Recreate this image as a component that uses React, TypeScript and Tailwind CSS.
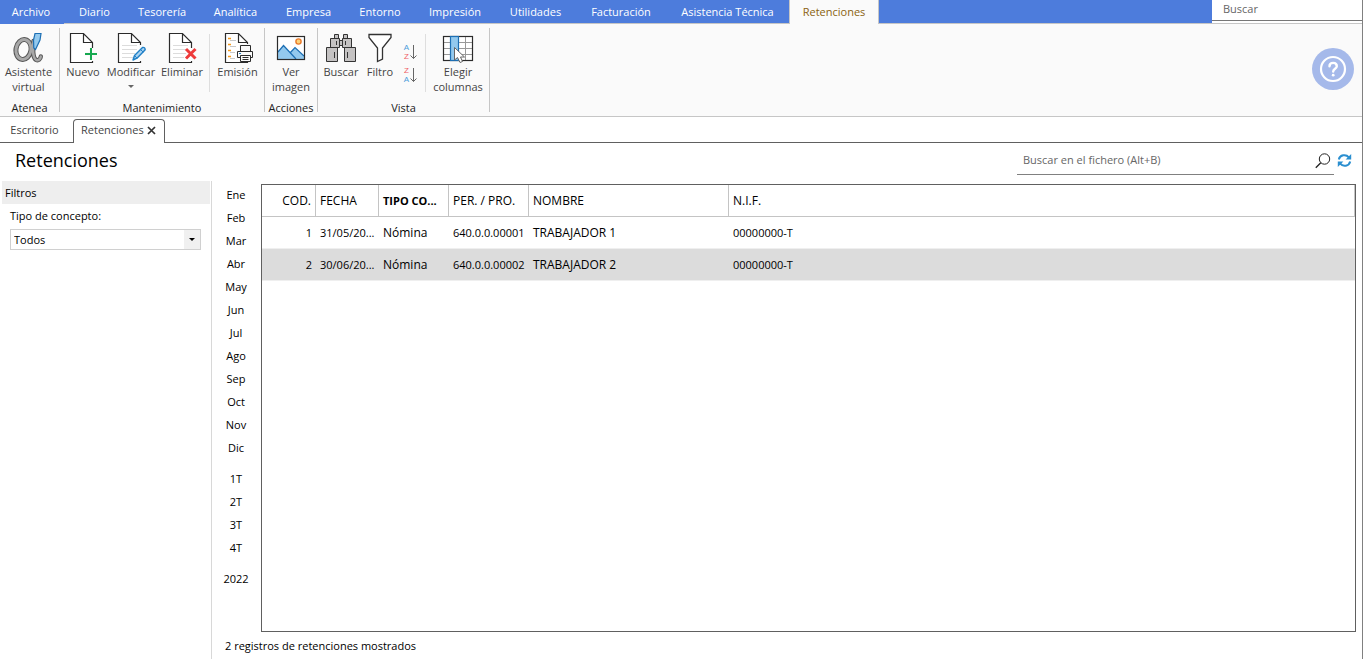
import { useState } from 'react'
import type { ReactNode } from 'react'

const menu = [
  { label: 'Archivo', width: 'w-16' },
  { label: 'Diario', width: 'w-[61px]' },
  { label: 'Tesorería', width: 'w-[74px]' },
  { label: 'Analítica', width: 'w-[73px]' },
  { label: 'Empresa', width: 'w-[73px]' },
  { label: 'Entorno', width: 'w-[70px]' },
  { label: 'Impresión', width: 'w-[80px]' },
  { label: 'Utilidades', width: 'w-[81px]' },
  { label: 'Facturación', width: 'w-[90px]' },
  { label: 'Asistencia Técnica', width: 'w-[123px]' },
]

const periods = [
  ['Ene', 'Feb', 'Mar', 'Abr', 'May', 'Jun', 'Jul', 'Ago', 'Sep', 'Oct', 'Nov', 'Dic'],
  ['1T', '2T', '3T', '4T'],
  ['2022'],
]

const rows = [
  { cod: 1, fecha: '31/05/20...', tipo: 'Nómina', cuenta: '640.0.0.00001', nombre: 'TRABAJADOR 1', nif: '00000000-T' },
  { cod: 2, fecha: '30/06/20...', tipo: 'Nómina', cuenta: '640.0.0.00002', nombre: 'TRABAJADOR 2', nif: '00000000-T' },
]

function Icon({ children }: { children: ReactNode }) {
  return (
    <svg viewBox="0 0 32 32" className="size-8 shrink-0" fill="none" aria-hidden="true">
      {children}
    </svg>
  )
}

function Page({ lines = false }: { lines?: boolean }) {
  return (
    <>
      <path d="M25.5 30.5H3.5V1.5H16.5L25.5 10.5V30.5" fill="#fff" />
      {lines && <path d="M7 13.5H22M7 17.5H22M7 21.5H20M7 25.5H18" stroke="#dcdcdc" />}
      <path d="M25.5 16V10.5L16.5 1.5H3.5V30.5H25.5V29M16.5 1.5V10.5H25.5" stroke="#2b2b2b" strokeWidth="1.2" />
    </>
  )
}

function AtheneaIcon() {
  return (
    <Icon>
      <g strokeLinecap="round">
        <ellipse cx="10.5" cy="17.5" rx="7.5" ry="10" stroke="#555" strokeWidth="5" transform="rotate(10 10.5 17.5)" />
        <path d="M20.5 9C19.5 17 20 26 23 27.8C25.5 29 27.5 27 27.8 24.5" stroke="#555" strokeWidth="4.4" />
        <ellipse cx="10.5" cy="17.5" rx="7.5" ry="10" stroke="#a8a8a8" strokeWidth="3" transform="rotate(10 10.5 17.5)" />
        <path d="M20.5 9C19.5 17 20 26 23 27.8C25.5 29 27.5 27 27.8 24.5" stroke="#a8a8a8" strokeWidth="2.4" />
      </g>
      <path d="M22 1.5H28L27 8L22.5 17.5L20.8 16L20.5 8Z" fill="#93c9ee" stroke="#1d6fb4" strokeWidth="1.2" />
    </Icon>
  )
}

function NewIcon() {
  return (
    <Icon>
      <Page />
      <path d="M18 22H30M24 16V28" stroke="#fafafa" strokeWidth="4" />
      <path d="M18 22H30M24 16V28" stroke="#16a84f" strokeWidth="2" />
    </Icon>
  )
}

function EditIcon() {
  return (
    <Icon>
      <Page lines />
      <path d="M24 13H32V28H24Z" fill="#fafafa" />
      <path d="M18 28L19.5 23.5L27.5 15.5Q30 15 30.2 17.8L22 26.2Z" fill="#a9d3f2" stroke="#1f7fc6" strokeWidth="1.4" strokeLinejoin="round" />
      <path d="M25.5 17.5L28.3 20.2M19.5 23.5L22 26.2" stroke="#1f7fc6" />
    </Icon>
  )
}

function DeleteIcon() {
  return (
    <Icon>
      <Page lines />
      <path d="M20 17L29.5 26.5M29.5 17L20 26.5" stroke="#ee3b3b" strokeWidth="3" />
    </Icon>
  )
}

function PrintIcon() {
  return (
    <Icon>
      <Page />
      <path d="M6 6.5H9M6 12.5H9M6 18.5H9M6 24.5H9" stroke="#f59a1c" strokeWidth="1.6" />
      <path d="M8 8.5H14M8 14.5H14M8 20.5H13M8 26.5H13" stroke="#c9c9c9" />
      <path d="M17 12H30V18H32V27H30V30H17V27H14V18H17Z" fill="#fafafa" />
      <path d="M18.5 19.5V13.5H28.5V19.5M18.5 25.5H15.5V19.5H30.5V25.5H28.5M18.5 23.5H28.5V29.5H18.5ZM20.5 25.5H26.5M20.5 27.5H26.5" stroke="#2b2b2b" />
      <path d="M17 21.5H19" stroke="#1f7fc6" />
    </Icon>
  )
}

function ImageIcon() {
  return (
    <Icon>
      <rect x="2.5" y="4.5" width="27" height="23" fill="#fff" />
      <path d="M3 20L8.5 13.5L15 20L20 15.5L29 24V27.5H3Z" fill="#93c9ee" />
      <path d="M3 20L8.5 13.5L21 27M15.5 20.5L20 15.5L29 24" stroke="#1d6fb4" strokeWidth="1.2" />
      <circle cx="23.5" cy="9.5" r="2.6" fill="#fbd37b" stroke="#ea7b2c" strokeWidth="1.4" />
      <rect x="2.5" y="4.5" width="27" height="23" stroke="#2b2b2b" strokeWidth="1.2" />
    </Icon>
  )
}

function BinocularsIcon() {
  return (
    <Icon>
      <g fill="#c4c2c2" stroke="#333">
        <path d="M9.5 2.5H13.5V6.5H9.5ZM18.5 2.5H22.5V6.5H18.5ZM14.5 8.5H17.5V13.5H14.5Z" />
        <path d="M5.5 6.5H14.5V15.5H5.5ZM17.5 6.5H26.5V15.5H17.5Z" />
        <path d="M1.5 15.5H12.5V29.5H1.5ZM19.5 15.5H30.5V29.5H19.5Z" />
        <path d="M11.5 9V13M20.5 9V13M9.5 20V26M22.5 20V26" />
      </g>
    </Icon>
  )
}

function FilterIcon() {
  return (
    <Icon>
      <path d="M5 2.5H27V5.5L18.5 16V27L13.5 29.5V16L5 5.5Z" fill="#fff" stroke="#333" strokeWidth="1.3" />
    </Icon>
  )
}

function ColumnsIcon() {
  return (
    <Icon>
      <rect x="1.5" y="4.5" width="29" height="24" fill="#fff" />
      <path d="M2 10.5H30M2 16.5H30M2 22.5H30M23.5 5V28" stroke="#999" />
      <rect x="1.5" y="4.5" width="29" height="24" stroke="#2b2b2b" strokeWidth="1.2" />
      <rect x="8.5" y="4.5" width="8" height="24" fill="#93c9ee" stroke="#1d6fb4" strokeWidth="1.2" />
      <path d="M12.5 15.5V28L15.5 25.5L18 30.5L20.5 29.5L18.5 25H22.5Z" fill="#fff" stroke="#666" />
    </Icon>
  )
}

function SortButton({ letters, label }: { letters: string[]; label: string }) {
  return (
    <button type="button" aria-label={label} className="flex h-[23px] w-5 items-center pl-[3px]">
      <span className="flex w-[7px] flex-col items-center font-['Liberation_Sans',sans-serif] text-[8px] leading-[9px]">
        {letters.map(l => (
          <span key={l} className={l === 'A' ? 'text-[#4b9cdb]' : 'text-[#ef5f66]'}>{l}</span>
        ))}
      </span>
      <svg viewBox="0 0 8 16" className="h-4 w-2" fill="none" stroke="#666">
        <path d="M3.5 1V14.5M.5 11.5L3.5 14.5L6.5 11.5" />
      </svg>
    </button>
  )
}

interface ToolProps {
  icon: ReactNode
  label: string
  width: string
  menu?: boolean
}

function Tool({ icon, label, width, menu = false }: ToolProps) {
  return (
    <button type="button" className={`flex flex-col items-center leading-[15px] text-[#444] ${width}`}>
      {icon}
      <span>{label}</span>
      {menu && <span className="mt-1.5 size-0 border-x-[3px] border-t-[3px] border-x-transparent border-t-[#666]" />}
    </button>
  )
}

function Group({ title, width, children }: { title: string; width: string; children: ReactNode }) {
  return (
    <>
      <div className={`flex flex-col justify-between pt-2 ${width}`}>
        <div className="flex justify-center">{children}</div>
        <div className="h-4 text-center leading-4 text-[#222]">{title}</div>
      </div>
      <div className="my-1 w-px bg-[#c6c6c6]" />
    </>
  )
}

function Divider() {
  return <div className="mx-[5px] mt-0.5 h-[58px] w-px bg-[#dedede]" />
}

function DataTable() {
  const [selected, setSelected] = useState(2)
  const head = 'h-8 truncate border-r border-b border-[#c4c4c4] px-1 pt-px font-normal'
  const cell = 'h-8 border-b border-[#efefef] px-1 pt-px'

  return (
    <table className="w-full table-fixed border-separate border-spacing-0">
      <colgroup>
        <col className="w-[54px]" />
        <col className="w-[63px]" />
        <col className="w-[70px]" />
        <col className="w-[80px]" />
        <col className="w-[200px]" />
        <col />
      </colgroup>
      <thead>
        <tr className="text-left text-[12px]">
          <th className={`${head} text-right`}>COD.</th>
          <th className={head}>FECHA</th>
          <th className="h-8 border-r border-b border-[#c4c4c4] pt-px pl-1 text-[11px] font-bold whitespace-nowrap">TIPO CO...</th>
          <th className={head}>PER. / PRO.</th>
          <th className={head}>NOMBRE</th>
          <th className={head}>N.I.F.</th>
        </tr>
      </thead>
      <tbody>
        {rows.map(r => (
          <tr key={r.cod} onClick={() => setSelected(r.cod)} className={r.cod === selected ? 'bg-[#dcdcdc]' : ''}>
            <td className={`${cell} text-right`}>{r.cod}</td>
            <td className={`${cell} whitespace-nowrap`}>{r.fecha}</td>
            <td className={`${cell} text-[12px]`}>{r.tipo}</td>
            <td className={`${cell} whitespace-nowrap`}>{r.cuenta}</td>
            <td className={`${cell} text-[12px]`}>{r.nombre}</td>
            <td className={cell}>{r.nif}</td>
          </tr>
        ))}
      </tbody>
    </table>
  )
}

export default function App() {
  return (
    <div className="flex h-screen flex-col border-r border-[#808080] bg-white font-['Open_Sans',sans-serif] text-[11px] text-black">
      {/* Menu */}
      <nav className="flex h-6 shrink-0 bg-[#4d7cdc] text-white">
        {menu.map((m, i) => (
          <button key={m.label} type="button" className={`shrink-0 whitespace-nowrap ${m.width} ${i === 0 ? 'pr-0.5' : 'border-b border-[#c6c6c6] pt-px'}`}>
            {m.label}
          </button>
        ))}
        <button type="button" className="w-[90px] shrink-0 border-x border-[#c6c6c6] bg-[#fafafa] text-[#8a6210]">Retenciones</button>
        <div className="flex-1 border-b border-[#c6c6c6]" />
        <div className="w-[150px] border-b border-[#c6c6c6] bg-white">
          <input
            type="text"
            aria-label="Buscar"
            placeholder="Buscar"
            className="block h-[21px] w-full border-b border-[#777] px-[11px] pb-1 outline-none placeholder:text-[#666]"
          />
        </div>
      </nav>

      {/* Ribbon */}
      <header className="flex h-[93px] shrink-0 border-b border-[#c6c6c6] bg-[#fafafa]">
        <Group title="Atenea" width="w-[59px]">
          <Tool icon={<AtheneaIcon />} label="Asistente virtual" width="w-[57px] pr-0.5" />
        </Group>
        <Group title="Mantenimiento" width="w-[204px]">
          <Tool icon={<NewIcon />} label="Nuevo" width="w-[38px]" />
          <Tool icon={<EditIcon />} label="Modificar" width="w-[58px]" menu />
          <Tool icon={<DeleteIcon />} label="Eliminar" width="w-[44px]" />
          <Divider />
          <Tool icon={<PrintIcon />} label="Emisión" width="w-[45px]" />
        </Group>
        <Group title="Acciones" width="w-[52px]">
          <Tool icon={<ImageIcon />} label="Ver imagen" width="w-[44px]" />
        </Group>
        <Group title="Vista" width="w-[171px]">
          <Tool icon={<BinocularsIcon />} label="Buscar" width="w-[38px]" />
          <Tool icon={<FilterIcon />} label="Filtro" width="w-10" />
          <div className="pt-2">
            <SortButton letters={['A', 'Z']} label="Orden ascendente" />
            <SortButton letters={['Z', 'A']} label="Orden descendente" />
          </div>
          <Divider />
          <Tool icon={<ColumnsIcon />} label="Elegir columnas" width="w-[54px]" />
        </Group>
        <button type="button" aria-label="Ayuda" className="mt-6 mr-2 ml-auto self-start">
          <svg viewBox="0 0 42 42" className="size-[42px]" fill="none">
            <circle cx="21" cy="21" r="21" fill="#a5b9ea" />
            <circle cx="21" cy="21" r="12" stroke="#fff" strokeWidth="2.2" />
            <path d="M17.5 18.2C17.5 13.8 24.8 13.8 24.8 18.2C24.8 20.8 21.2 20.8 21.2 23.6" stroke="#fff" strokeWidth="2.4" strokeLinecap="round" />
            <circle cx="21.2" cy="27.2" r="1.4" fill="#fff" />
          </svg>
        </button>
      </header>

      {/* Open windows */}
      <div className="flex h-[26px] shrink-0 text-[#444]">
        <button type="button" className="w-[73px] border-b border-[#606060] pt-0.5 pr-1">Escritorio</button>
        <div className="mt-0.5 flex w-[92px] items-center justify-between rounded-t border-x border-t border-[#606060] pr-2 pb-0.5 pl-[7px]">
          <button type="button">Retenciones</button>
          <button type="button" aria-label="Cerrar">
            <svg viewBox="0 0 9 9" className="size-[9px]">
              <path d="M1 1L8 8M8 1L1 8" stroke="#333" strokeWidth="1.7" />
            </svg>
          </button>
        </div>
        <div className="flex-1 border-b border-[#606060]" />
      </div>

      <div className="flex h-[38px] shrink-0 items-start pr-2.5">
        <h1 className="pl-[15px] text-[18px] leading-[34px]">Retenciones</h1>
        <div className="ml-auto flex h-8 w-[317px] items-center border-b border-[#808080] pt-1 pr-[3px]">
          <input
            type="text"
            aria-label="Buscar en el fichero"
            placeholder="Buscar en el fichero (Alt+B)"
            className="min-w-0 flex-1 pl-1.5 outline-none placeholder:text-[#666]"
          />
          <svg viewBox="0 0 16 16" className="size-4" fill="none" stroke="#222" aria-hidden="true">
            <circle cx="9.5" cy="6" r="5.2" />
            <path d="M5.8 9.8L0.8 14.8" strokeWidth="1.3" />
          </svg>
        </div>
        <button type="button" aria-label="Actualizar" className="mt-2.5 ml-[3px]">
          <svg viewBox="0 0 15 15" className="size-[15px]" fill="none">
            <path d="M1.8 6.5C2.8 1.8 9 .8 11.8 4.3M13.2 8.5C12.2 13.2 6 14.2 3.2 10.7" stroke="#2b8fd0" strokeWidth="2" />
            <path d="M14.2 1V6.6H8.6ZM.8 14V8.4H6.4Z" fill="#2b8fd0" />
          </svg>
        </button>
      </div>

      <div className="flex min-h-0 flex-1">
        {/* Filters */}
        <aside className="w-[212px] shrink-0 border-r border-[#d8d8d8]">
          <h2 className="mr-px ml-0.5 h-[23px] bg-[#eee] pl-[3px] leading-[23px]">Filtros</h2>
          <div className="px-2.5 pt-1">
            <label htmlFor="concepto" className="block h-[21px] leading-4">Tipo de concepto:</label>
            <div className="relative h-[21px]">
              <select id="concepto" className="h-full w-full appearance-none rounded-none border border-[#d0d0d0] bg-white pt-px pl-[3px] outline-none">
                <option>Todos</option>
              </select>
              <span className="pointer-events-none absolute top-px right-px flex h-[19px] w-4 items-center justify-center bg-[#f0f0f0]">
                <span className="size-0 border-x-[3px] border-t-[3px] border-x-transparent border-t-black" />
              </span>
            </div>
          </div>
        </aside>

        {/* Records */}
        <main className="flex min-w-0 flex-1 flex-col pt-[3px] pr-1.5">
          <div className="flex min-h-0 flex-1">
            <div className="flex w-[49px] shrink-0 flex-col gap-2 pr-px">
              {periods.map(group => (
                <div key={group[0]} className="flex flex-col">
                  {group.map(p => (
                    <button key={p} type="button" className="h-[23px]">{p}</button>
                  ))}
                </div>
              ))}
            </div>
            <div className="min-w-0 flex-1 border border-[#606060]">
              <DataTable />
            </div>
          </div>
          <footer className="h-[27px] shrink-0 pl-[13px] leading-[27px]">2 registros de retenciones mostrados</footer>
        </main>
      </div>
    </div>
  )
}
